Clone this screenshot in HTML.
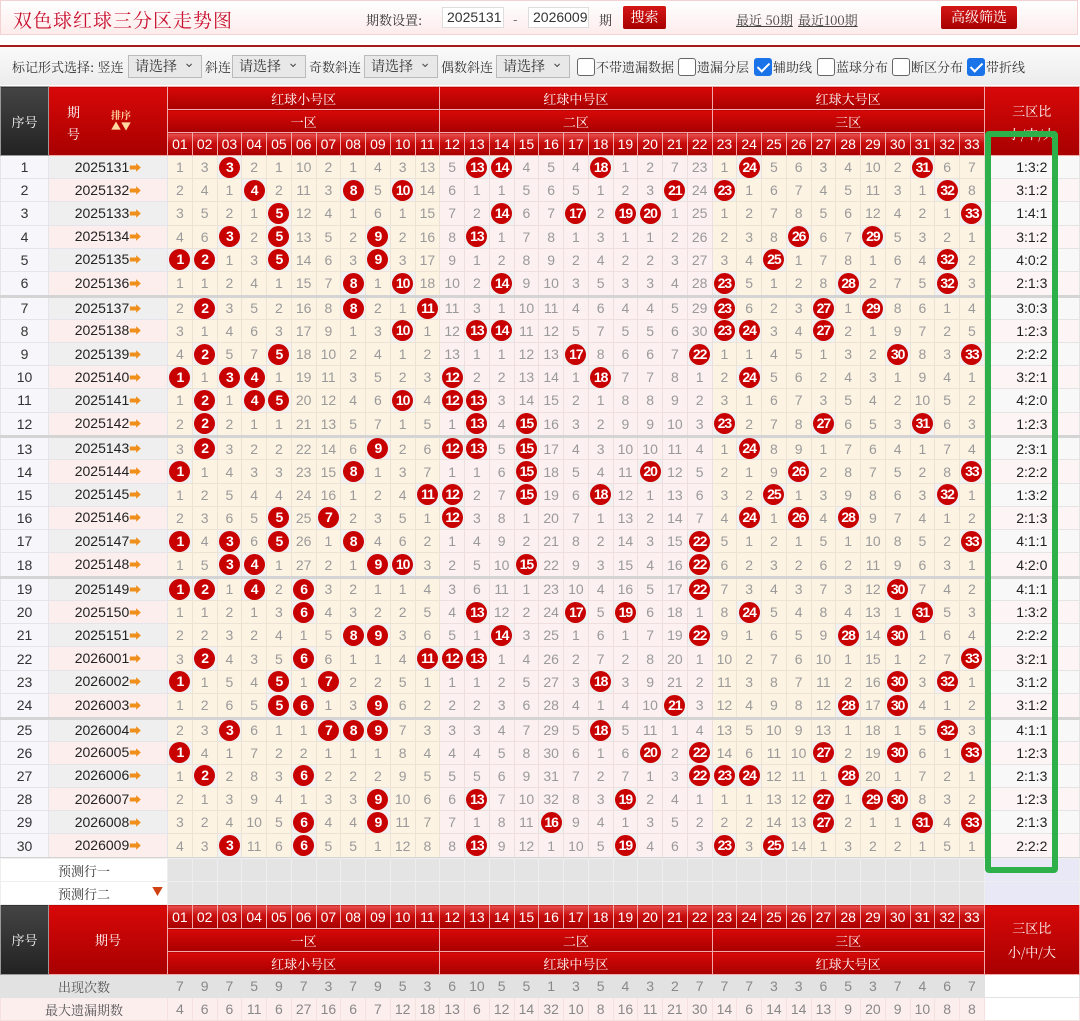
<!DOCTYPE html>
<html><head><meta charset="utf-8">
<style>
*{box-sizing:border-box;margin:0;padding:0}
body{width:1080px;height:1018px;overflow:hidden;background:#fff;font-family:"Liberation Sans","Noto Serif CJK SC",sans-serif;position:relative}
.cn{font-family:"Noto Serif CJK SC","Noto Sans CJK SC",serif}
#top{position:absolute;left:0;top:0;width:1078px;height:35px;border:1px solid #f2d2d2;background:linear-gradient(#fff,#fdecec)}
#top *{position:absolute}
.title{left:12px;top:5px;font-size:19px;color:#c8102e;font-family:"Noto Serif CJK SC",serif;letter-spacing:1px}
.lbl{font-size:13px;color:#333;font-family:"Noto Serif CJK SC",serif}
.inp{background:#fff;border:1px solid #ddd;font-size:14px;color:#333;height:21px;line-height:19px;padding-left:4px}
.btn{background:linear-gradient(#d41616,#a80000);color:#fff;font-size:14px;text-align:center;border-radius:2px;line-height:22px;height:23px}
.lnk{font-size:13px;color:#444;text-decoration:underline;font-family:"Noto Serif CJK SC",serif}
#redline{position:absolute;left:0;top:45px;width:1080px;height:2px;background:#a51a1a}
#opt{position:absolute;left:0;top:47px;width:1080px;height:38px;background:linear-gradient(#fafafa,#ececec);font-size:13px;color:#333}
#opt *{position:absolute}
.o{top:10px;font-family:"Noto Serif CJK SC",serif}
.sel{top:8px;height:23px;width:74px;border:1px solid #bbb;background:#e8e8e8;font-size:14px;padding-left:6px;line-height:21px;font-family:"Noto Serif CJK SC",serif}
.sel::after{content:"⌄";position:absolute;right:6px;top:-4px;font-size:14px;color:#555}
.cb{top:11px;width:18px;height:18px;border:1px solid #666;border-radius:3px;background:#fff}
.ck{background:#1a73e8;border-color:#1a73e8}
.ck::after{content:"";position:absolute;left:5px;top:1px;width:5px;height:10px;border:solid #fff;border-width:0 2px 2px 0;transform:rotate(45deg)}
table{position:absolute;left:0;border-collapse:collapse;table-layout:fixed;width:1079px}
#t1{top:86px}
#t2{top:858px}
td,th{padding:0;text-align:center;overflow:hidden;white-space:nowrap}
th{color:#fff;font-weight:normal;border:1px solid #f1aaaa;background:linear-gradient(#d80808,#a80000);font-size:13px;font-family:"Noto Serif CJK SC",serif}
th.dk{background:linear-gradient(#444,#222);border-color:#999}
th.n{background:linear-gradient(#e85050 0%,#c80c0c 45%,#a80000);font-family:"Liberation Sans",sans-serif;font-size:14px}
thead tr{height:23px}
#t1 tbody tr{height:23.2px}
#t1 tbody tr.s{height:24.7px}
td{font-size:14px;color:#9a9a9a;border:1px solid #ece2d6}
td:nth-child(1){color:#333;background:#f7f7fb;border-color:#e4e4ea}
td:nth-child(2){color:#222;background:#efefef;border-color:#e4e4ea;font-size:14px}
tr:nth-child(even) td:nth-child(2){background:#fdeeee}
td:nth-child(n+3){background:#fdf3e3}
td:nth-child(n+14){background:#fcf0f0;border-color:#eedede}
td:nth-child(n+25){background:#fdf3e3;border-color:#ece2d6}
td:nth-child(36){background:#f8f8f8;color:#222;border-color:#e4e4e4;text-align:center}
tr:nth-child(even) td:nth-child(36){background:#fdf5f5}
td:has(i){background:#f1f1f1 !important}
i{display:inline-block;width:21px;height:21px;border-radius:50%;background:#c80000;color:#fff;font-style:normal;font-weight:bold;font-size:14px;line-height:21px;letter-spacing:-1px;vertical-align:middle}
.p::after{content:"➡";color:#f0901c;font-size:12px}
tr.s td{border-bottom:3px solid #d4d4d4}
.pr{height:23px}
.pr td{background:#e4e4e4 !important;border-color:#eee}
.pr td.w{background:#fff !important;color:#333;font-size:13px;font-family:"Noto Serif CJK SC",serif}
.pr td.lv{background:#e8e8f6 !important}
.f1,.f2{height:23px}
.f1 td{background:#e2e2e2 !important;color:#888;border-color:#e2e2e2}
.f2 td{background:#fdeeee !important;color:#888;border-color:#f5e0e0}
.f1 td.w,.f2 td.w{font-size:13px;font-family:"Noto Serif CJK SC",serif;color:#555}
.f1 td.e,.f2 td.e{background:#fff !important}
#green{position:absolute;left:985px;top:131px;width:73px;height:742px;border:6px solid #2db04a;border-radius:4px}
</style></head><body>
<div id="top">
<div class="title">双色球红球三分区走势图</div>
<div class="lbl" style="left:365px;top:9px">期数设置:</div>
<div class="inp" style="left:441px;top:6px;width:62px">2025131</div>
<div class="lbl" style="left:512px;top:8px">-</div>
<div class="inp" style="left:527px;top:6px;width:61px">2026009</div>
<div class="lbl" style="left:598px;top:9px">期</div>
<div class="btn cn" style="left:622px;top:5px;width:43px">搜索</div>
<div class="lnk" style="left:735px;top:9px">最近 50期</div>
<div class="lnk" style="left:797px;top:9px">最近100期</div>
<div class="btn cn" style="left:940px;top:5px;width:76px">高级筛选</div>
</div>
<div id="redline"></div>
<div id="opt">
<span class="o" style="left:12px">标记形式选择: 竖连</span>
<span class="sel" style="left:128px">请选择</span>
<span class="o" style="left:205px">斜连</span>
<span class="sel" style="left:232px">请选择</span>
<span class="o" style="left:309px">奇数斜连</span>
<span class="sel" style="left:364px">请选择</span>
<span class="o" style="left:441px">偶数斜连</span>
<span class="sel" style="left:496px">请选择</span>
<span class="cb" style="left:577px"></span><span class="o" style="left:596px">不带遗漏数据</span>
<span class="cb" style="left:678px"></span><span class="o" style="left:697px">遗漏分层</span>
<span class="cb ck" style="left:754px"></span><span class="o" style="left:773px">辅助线</span>
<span class="cb" style="left:817px"></span><span class="o" style="left:836px">蓝球分布</span>
<span class="cb" style="left:892px"></span><span class="o" style="left:911px">断区分布</span>
<span class="cb ck" style="left:967px"></span><span class="o" style="left:986px">带折线</span>
</div>

<table id="t1">
<colgroup><col style="width:48px"><col style="width:119px"><col span="33" style="width:24.75px"><col style="width:95px"></colgroup>
<thead>
<tr><th rowspan="3" class="dk">序号</th><th rowspan="3" style="position:relative"><span style="position:absolute;left:18px;top:14px;line-height:22px">期<br>号</span><span style="position:absolute;left:62px;top:22px;font-size:10px;color:#ffd7a0;line-height:11px;font-weight:bold">排序<br>▲▼</span></th><th colspan="11">红球小号区</th><th colspan="11">红球中号区</th><th colspan="11">红球大号区</th><th rowspan="3" style="line-height:23px;vertical-align:top;padding-top:12px">三区比<br>小/中/大</th></tr>
<tr><th colspan="11">一区</th><th colspan="11">二区</th><th colspan="11">三区</th></tr>
<tr><th class="n">01</th><th class="n">02</th><th class="n">03</th><th class="n">04</th><th class="n">05</th><th class="n">06</th><th class="n">07</th><th class="n">08</th><th class="n">09</th><th class="n">10</th><th class="n">11</th><th class="n">12</th><th class="n">13</th><th class="n">14</th><th class="n">15</th><th class="n">16</th><th class="n">17</th><th class="n">18</th><th class="n">19</th><th class="n">20</th><th class="n">21</th><th class="n">22</th><th class="n">23</th><th class="n">24</th><th class="n">25</th><th class="n">26</th><th class="n">27</th><th class="n">28</th><th class="n">29</th><th class="n">30</th><th class="n">31</th><th class="n">32</th><th class="n">33</th></tr>
</thead>
<tbody>
<tr><td>1<td class="p">2025131<td>1<td>3<td><i>3</i><td>2<td>1<td>10<td>2<td>1<td>4<td>3<td>13<td>5<td><i>13</i><td><i>14</i><td>4<td>5<td>4<td><i>18</i><td>1<td>2<td>7<td>23<td>1<td><i>24</i><td>5<td>6<td>3<td>4<td>10<td>2<td><i>31</i><td>6<td>7<td>1:3:2</tr>
<tr><td>2<td class="p">2025132<td>2<td>4<td>1<td><i>4</i><td>2<td>11<td>3<td><i>8</i><td>5<td><i>10</i><td>14<td>6<td>1<td>1<td>5<td>6<td>5<td>1<td>2<td>3<td><i>21</i><td>24<td><i>23</i><td>1<td>6<td>7<td>4<td>5<td>11<td>3<td>1<td><i>32</i><td>8<td>3:1:2</tr>
<tr><td>3<td class="p">2025133<td>3<td>5<td>2<td>1<td><i>5</i><td>12<td>4<td>1<td>6<td>1<td>15<td>7<td>2<td><i>14</i><td>6<td>7<td><i>17</i><td>2<td><i>19</i><td><i>20</i><td>1<td>25<td>1<td>2<td>7<td>8<td>5<td>6<td>12<td>4<td>2<td>1<td><i>33</i><td>1:4:1</tr>
<tr><td>4<td class="p">2025134<td>4<td>6<td><i>3</i><td>2<td><i>5</i><td>13<td>5<td>2<td><i>9</i><td>2<td>16<td>8<td><i>13</i><td>1<td>7<td>8<td>1<td>3<td>1<td>1<td>2<td>26<td>2<td>3<td>8<td><i>26</i><td>6<td>7<td><i>29</i><td>5<td>3<td>2<td>1<td>3:1:2</tr>
<tr><td>5<td class="p">2025135<td><i>1</i><td><i>2</i><td>1<td>3<td><i>5</i><td>14<td>6<td>3<td><i>9</i><td>3<td>17<td>9<td>1<td>2<td>8<td>9<td>2<td>4<td>2<td>2<td>3<td>27<td>3<td>4<td><i>25</i><td>1<td>7<td>8<td>1<td>6<td>4<td><i>32</i><td>2<td>4:0:2</tr>
<tr class="s"><td>6<td class="p">2025136<td>1<td>1<td>2<td>4<td>1<td>15<td>7<td><i>8</i><td>1<td><i>10</i><td>18<td>10<td>2<td><i>14</i><td>9<td>10<td>3<td>5<td>3<td>3<td>4<td>28<td><i>23</i><td>5<td>1<td>2<td>8<td><i>28</i><td>2<td>7<td>5<td><i>32</i><td>3<td>2:1:3</tr>
<tr><td>7<td class="p">2025137<td>2<td><i>2</i><td>3<td>5<td>2<td>16<td>8<td><i>8</i><td>2<td>1<td><i>11</i><td>11<td>3<td>1<td>10<td>11<td>4<td>6<td>4<td>4<td>5<td>29<td><i>23</i><td>6<td>2<td>3<td><i>27</i><td>1<td><i>29</i><td>8<td>6<td>1<td>4<td>3:0:3</tr>
<tr><td>8<td class="p">2025138<td>3<td>1<td>4<td>6<td>3<td>17<td>9<td>1<td>3<td><i>10</i><td>1<td>12<td><i>13</i><td><i>14</i><td>11<td>12<td>5<td>7<td>5<td>5<td>6<td>30<td><i>23</i><td><i>24</i><td>3<td>4<td><i>27</i><td>2<td>1<td>9<td>7<td>2<td>5<td>1:2:3</tr>
<tr><td>9<td class="p">2025139<td>4<td><i>2</i><td>5<td>7<td><i>5</i><td>18<td>10<td>2<td>4<td>1<td>2<td>13<td>1<td>1<td>12<td>13<td><i>17</i><td>8<td>6<td>6<td>7<td><i>22</i><td>1<td>1<td>4<td>5<td>1<td>3<td>2<td><i>30</i><td>8<td>3<td><i>33</i><td>2:2:2</tr>
<tr><td>10<td class="p">2025140<td><i>1</i><td>1<td><i>3</i><td><i>4</i><td>1<td>19<td>11<td>3<td>5<td>2<td>3<td><i>12</i><td>2<td>2<td>13<td>14<td>1<td><i>18</i><td>7<td>7<td>8<td>1<td>2<td><i>24</i><td>5<td>6<td>2<td>4<td>3<td>1<td>9<td>4<td>1<td>3:2:1</tr>
<tr><td>11<td class="p">2025141<td>1<td><i>2</i><td>1<td><i>4</i><td><i>5</i><td>20<td>12<td>4<td>6<td><i>10</i><td>4<td><i>12</i><td><i>13</i><td>3<td>14<td>15<td>2<td>1<td>8<td>8<td>9<td>2<td>3<td>1<td>6<td>7<td>3<td>5<td>4<td>2<td>10<td>5<td>2<td>4:2:0</tr>
<tr class="s"><td>12<td class="p">2025142<td>2<td><i>2</i><td>2<td>1<td>1<td>21<td>13<td>5<td>7<td>1<td>5<td>1<td><i>13</i><td>4<td><i>15</i><td>16<td>3<td>2<td>9<td>9<td>10<td>3<td><i>23</i><td>2<td>7<td>8<td><i>27</i><td>6<td>5<td>3<td><i>31</i><td>6<td>3<td>1:2:3</tr>
<tr><td>13<td class="p">2025143<td>3<td><i>2</i><td>3<td>2<td>2<td>22<td>14<td>6<td><i>9</i><td>2<td>6<td><i>12</i><td><i>13</i><td>5<td><i>15</i><td>17<td>4<td>3<td>10<td>10<td>11<td>4<td>1<td><i>24</i><td>8<td>9<td>1<td>7<td>6<td>4<td>1<td>7<td>4<td>2:3:1</tr>
<tr><td>14<td class="p">2025144<td><i>1</i><td>1<td>4<td>3<td>3<td>23<td>15<td><i>8</i><td>1<td>3<td>7<td>1<td>1<td>6<td><i>15</i><td>18<td>5<td>4<td>11<td><i>20</i><td>12<td>5<td>2<td>1<td>9<td><i>26</i><td>2<td>8<td>7<td>5<td>2<td>8<td><i>33</i><td>2:2:2</tr>
<tr><td>15<td class="p">2025145<td>1<td>2<td>5<td>4<td>4<td>24<td>16<td>1<td>2<td>4<td><i>11</i><td><i>12</i><td>2<td>7<td><i>15</i><td>19<td>6<td><i>18</i><td>12<td>1<td>13<td>6<td>3<td>2<td><i>25</i><td>1<td>3<td>9<td>8<td>6<td>3<td><i>32</i><td>1<td>1:3:2</tr>
<tr><td>16<td class="p">2025146<td>2<td>3<td>6<td>5<td><i>5</i><td>25<td><i>7</i><td>2<td>3<td>5<td>1<td><i>12</i><td>3<td>8<td>1<td>20<td>7<td>1<td>13<td>2<td>14<td>7<td>4<td><i>24</i><td>1<td><i>26</i><td>4<td><i>28</i><td>9<td>7<td>4<td>1<td>2<td>2:1:3</tr>
<tr><td>17<td class="p">2025147<td><i>1</i><td>4<td><i>3</i><td>6<td><i>5</i><td>26<td>1<td><i>8</i><td>4<td>6<td>2<td>1<td>4<td>9<td>2<td>21<td>8<td>2<td>14<td>3<td>15<td><i>22</i><td>5<td>1<td>2<td>1<td>5<td>1<td>10<td>8<td>5<td>2<td><i>33</i><td>4:1:1</tr>
<tr class="s"><td>18<td class="p">2025148<td>1<td>5<td><i>3</i><td><i>4</i><td>1<td>27<td>2<td>1<td><i>9</i><td><i>10</i><td>3<td>2<td>5<td>10<td><i>15</i><td>22<td>9<td>3<td>15<td>4<td>16<td><i>22</i><td>6<td>2<td>3<td>2<td>6<td>2<td>11<td>9<td>6<td>3<td>1<td>4:2:0</tr>
<tr><td>19<td class="p">2025149<td><i>1</i><td><i>2</i><td>1<td><i>4</i><td>2<td><i>6</i><td>3<td>2<td>1<td>1<td>4<td>3<td>6<td>11<td>1<td>23<td>10<td>4<td>16<td>5<td>17<td><i>22</i><td>7<td>3<td>4<td>3<td>7<td>3<td>12<td><i>30</i><td>7<td>4<td>2<td>4:1:1</tr>
<tr><td>20<td class="p">2025150<td>1<td>1<td>2<td>1<td>3<td><i>6</i><td>4<td>3<td>2<td>2<td>5<td>4<td><i>13</i><td>12<td>2<td>24<td><i>17</i><td>5<td><i>19</i><td>6<td>18<td>1<td>8<td><i>24</i><td>5<td>4<td>8<td>4<td>13<td>1<td><i>31</i><td>5<td>3<td>1:3:2</tr>
<tr><td>21<td class="p">2025151<td>2<td>2<td>3<td>2<td>4<td>1<td>5<td><i>8</i><td><i>9</i><td>3<td>6<td>5<td>1<td><i>14</i><td>3<td>25<td>1<td>6<td>1<td>7<td>19<td><i>22</i><td>9<td>1<td>6<td>5<td>9<td><i>28</i><td>14<td><i>30</i><td>1<td>6<td>4<td>2:2:2</tr>
<tr><td>22<td class="p">2026001<td>3<td><i>2</i><td>4<td>3<td>5<td><i>6</i><td>6<td>1<td>1<td>4<td><i>11</i><td><i>12</i><td><i>13</i><td>1<td>4<td>26<td>2<td>7<td>2<td>8<td>20<td>1<td>10<td>2<td>7<td>6<td>10<td>1<td>15<td>1<td>2<td>7<td><i>33</i><td>3:2:1</tr>
<tr><td>23<td class="p">2026002<td><i>1</i><td>1<td>5<td>4<td><i>5</i><td>1<td><i>7</i><td>2<td>2<td>5<td>1<td>1<td>1<td>2<td>5<td>27<td>3<td><i>18</i><td>3<td>9<td>21<td>2<td>11<td>3<td>8<td>7<td>11<td>2<td>16<td><i>30</i><td>3<td><i>32</i><td>1<td>3:1:2</tr>
<tr class="s"><td>24<td class="p">2026003<td>1<td>2<td>6<td>5<td><i>5</i><td><i>6</i><td>1<td>3<td><i>9</i><td>6<td>2<td>2<td>2<td>3<td>6<td>28<td>4<td>1<td>4<td>10<td><i>21</i><td>3<td>12<td>4<td>9<td>8<td>12<td><i>28</i><td>17<td><i>30</i><td>4<td>1<td>2<td>3:1:2</tr>
<tr><td>25<td class="p">2026004<td>2<td>3<td><i>3</i><td>6<td>1<td>1<td><i>7</i><td><i>8</i><td><i>9</i><td>7<td>3<td>3<td>3<td>4<td>7<td>29<td>5<td><i>18</i><td>5<td>11<td>1<td>4<td>13<td>5<td>10<td>9<td>13<td>1<td>18<td>1<td>5<td><i>32</i><td>3<td>4:1:1</tr>
<tr><td>26<td class="p">2026005<td><i>1</i><td>4<td>1<td>7<td>2<td>2<td>1<td>1<td>1<td>8<td>4<td>4<td>4<td>5<td>8<td>30<td>6<td>1<td>6<td><i>20</i><td>2<td><i>22</i><td>14<td>6<td>11<td>10<td><i>27</i><td>2<td>19<td><i>30</i><td>6<td>1<td><i>33</i><td>1:2:3</tr>
<tr><td>27<td class="p">2026006<td>1<td><i>2</i><td>2<td>8<td>3<td><i>6</i><td>2<td>2<td>2<td>9<td>5<td>5<td>5<td>6<td>9<td>31<td>7<td>2<td>7<td>1<td>3<td><i>22</i><td><i>23</i><td><i>24</i><td>12<td>11<td>1<td><i>28</i><td>20<td>1<td>7<td>2<td>1<td>2:1:3</tr>
<tr><td>28<td class="p">2026007<td>2<td>1<td>3<td>9<td>4<td>1<td>3<td>3<td><i>9</i><td>10<td>6<td>6<td><i>13</i><td>7<td>10<td>32<td>8<td>3<td><i>19</i><td>2<td>4<td>1<td>1<td>1<td>13<td>12<td><i>27</i><td>1<td><i>29</i><td><i>30</i><td>8<td>3<td>2<td>1:2:3</tr>
<tr><td>29<td class="p">2026008<td>3<td>2<td>4<td>10<td>5<td><i>6</i><td>4<td>4<td><i>9</i><td>11<td>7<td>7<td>1<td>8<td>11<td><i>16</i><td>9<td>4<td>1<td>3<td>5<td>2<td>2<td>2<td>14<td>13<td><i>27</i><td>2<td>1<td>1<td><i>31</i><td>4<td><i>33</i><td>2:1:3</tr>
<tr class="s"><td>30<td class="p">2026009<td>4<td>3<td><i>3</i><td>11<td>6<td><i>6</i><td>5<td>5<td>1<td>12<td>8<td>8<td><i>13</i><td>9<td>12<td>1<td>10<td>5<td><i>19</i><td>4<td>6<td>3<td><i>23</i><td>3<td><i>25</i><td>14<td>1<td>3<td>2<td>2<td>1<td>5<td>1<td>2:2:2</tr>
</tbody></table>

<table id="t2">
<colgroup><col style="width:48px"><col style="width:119px"><col span="33" style="width:24.75px"><col style="width:95px"></colgroup>
<tbody>
<tr class="pr"><td colspan="2" class="w">预测行一</td>
<td></td><td></td><td></td><td></td><td></td><td></td><td></td><td></td><td></td><td></td><td></td>
<td></td><td></td><td></td><td></td><td></td><td></td><td></td><td></td><td></td><td></td><td></td>
<td></td><td></td><td></td><td></td><td></td><td></td><td></td><td></td><td></td><td></td><td></td>
<td class="lv"></td></tr>
<tr class="pr"><td colspan="2" class="w" style="position:relative">预测行二<span style="position:absolute;right:4px;top:1px;color:#d04010;font-size:11px">▼</span></td>
<td></td><td></td><td></td><td></td><td></td><td></td><td></td><td></td><td></td><td></td><td></td>
<td></td><td></td><td></td><td></td><td></td><td></td><td></td><td></td><td></td><td></td><td></td>
<td></td><td></td><td></td><td></td><td></td><td></td><td></td><td></td><td></td><td></td><td></td>
<td class="lv"></td></tr>
<tr style="height:24px"><th rowspan="3" class="dk">序号</th><th rowspan="3">期号</th><th class="n">01</th><th class="n">02</th><th class="n">03</th><th class="n">04</th><th class="n">05</th><th class="n">06</th><th class="n">07</th><th class="n">08</th><th class="n">09</th><th class="n">10</th><th class="n">11</th><th class="n">12</th><th class="n">13</th><th class="n">14</th><th class="n">15</th><th class="n">16</th><th class="n">17</th><th class="n">18</th><th class="n">19</th><th class="n">20</th><th class="n">21</th><th class="n">22</th><th class="n">23</th><th class="n">24</th><th class="n">25</th><th class="n">26</th><th class="n">27</th><th class="n">28</th><th class="n">29</th><th class="n">30</th><th class="n">31</th><th class="n">32</th><th class="n">33</th><th rowspan="3" style="line-height:24px">三区比<br>小/中/大</th></tr>
<tr style="height:23px"><th colspan="11">一区</th><th colspan="11">二区</th><th colspan="11">三区</th></tr>
<tr style="height:23px"><th colspan="11">红球小号区</th><th colspan="11">红球中号区</th><th colspan="11">红球大号区</th></tr>
<tr class="f1"><td colspan="2" class="w">出现次数</td><td>7<td>9<td>7<td>5<td>9<td>7<td>3<td>7<td>9<td>5<td>3<td>6<td>10<td>5<td>5<td>1<td>3<td>5<td>4<td>3<td>2<td>7<td>7<td>7<td>3<td>3<td>6<td>5<td>3<td>7<td>4<td>6<td>7<td class="e"></td></tr>
<tr class="f2"><td colspan="2" class="w">最大遗漏期数</td><td>4<td>6<td>6<td>11<td>6<td>27<td>16<td>6<td>7<td>12<td>18<td>13<td>6<td>12<td>14<td>32<td>10<td>8<td>16<td>11<td>21<td>30<td>14<td>6<td>14<td>14<td>13<td>9<td>20<td>9<td>10<td>8<td>8<td class="e"></td></tr>
</tbody></table>
<div id="green"></div>
</body></html>
